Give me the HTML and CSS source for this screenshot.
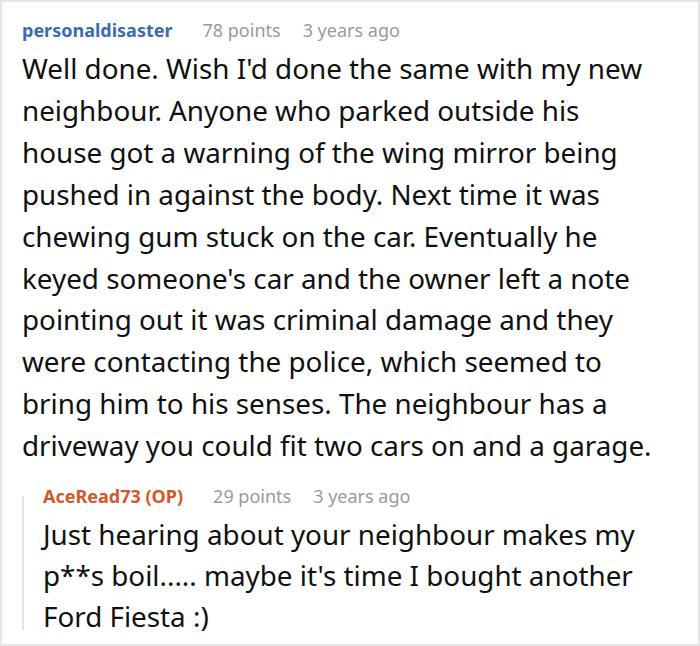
FILE: index.html
```html
<!DOCTYPE html>
<html>
<head>
<meta charset="utf-8">
<link rel="stylesheet" href="styles.css">
</head>
<body>
<div class="frame">
  <div class="comment">
    <div class="meta">
      <span class="user">personaldisaster</span>
      <span class="info">78 points</span>
      <span class="info">3 years ago</span>
    </div>
    <p class="text">Well done. Wish I'd done the same with my new neighbour. Anyone who parked outside his house got a warning of the wing mirror being pushed in against the body. Next time it was chewing gum stuck on the car. Eventually he keyed someone's car and the owner left a note pointing out it was criminal damage and they were contacting the police, which seemed to bring him to his senses. The neighbour has a driveway you could fit two cars on and a garage.</p>
  </div>
  <div class="reply">
    <div class="meta">
      <span class="user op">AceRead73 (OP)</span>
      <span class="info">29 points</span>
      <span class="info">3 years ago</span>
    </div>
    <p class="text reply-text">Just hearing about your neighbour makes my p**s boil..... maybe it's time I bought another Ford Fiesta :)</p>
  </div>
</div>
</body>
</html>
```
FILE: styles.css
```css
html, body {
  margin: 0;
  padding: 0;
  background: #fff;
}
.frame {
  width: 700px;
  height: 646px;
  box-sizing: border-box;
  border: 2px solid #e6e6e6;
  padding: 16px 38px 0 20px;
  font-family: "Noto Sans", "Open Sans", sans-serif;
  color: #111;
  overflow: hidden;
}
.meta {
  display: flex;
  align-items: baseline;
  gap: 22px;
  height: 30px;
}
.user {
  font-size: 18px;
  font-weight: 700;
  color: #3b6bb3;
  margin-right: 8px;
}
.user.op {
  color: #d4582a;
}
.info {
  font-size: 18px;
  color: #9a9a9a;
}
.text {
  margin: 0;
  font-size: 27.8px;
  line-height: 41.9px;
}
.reply-text {
  line-height: 41.2px;
}
.reply {
  margin-top: 17px;
  padding-left: 21px;
  background: linear-gradient(#e3e3e3, #e3e3e3) no-repeat 0 12px / 2px calc(100% - 20px);
}
```
